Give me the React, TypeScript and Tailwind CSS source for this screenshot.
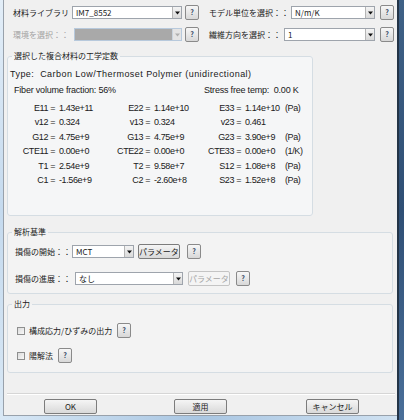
import React from "react";

type Row = [string, string, string, string, string, string, string];

const constants: Row[] = [
  ["E11 =", "1.43e+11", "E22 =", "1.14e+10", "E33 =", "1.14e+10", "(Pa)"],
  ["v12 =", "0.324", "v13 =", "0.324", "v23 =", "0.461", ""],
  ["G12 =", "4.75e+9", "G13 =", "4.75e+9", "G23 =", "3.90e+9", "(Pa)"],
  ["CTE11 =", "0.00e+0", "CTE22 =", "0.00e+0", "CTE33 =", "0.00e+0", "(1/K)"],
  ["T1 =", "2.54e+9", "T2 =", "9.58e+7", "S12 =", "1.08e+8", "(Pa)"],
  ["C1 =", "-1.56e+9", "C2 =", "-2.60e+8", "S23 =", "1.52e+8", "(Pa)"],
];

function Arrow({ disabled }: { disabled?: boolean }) {
  return (
    <div
      className={`flex h-full w-[9px] items-center justify-center border-l ${
        disabled
          ? "border-[#c9d3dd] bg-[#e4e4e4]"
          : "border-[#b5b5b5] bg-gradient-to-b from-[#f4f4f4] to-[#d9d9d9]"
      }`}
    >
      <svg width="5" height="4" viewBox="0 0 5 4">
        <path d="M0 0.5H5L2.5 3.5Z" fill={disabled ? "#b0b0b0" : "#111"} />
      </svg>
    </div>
  );
}

function Select({
  width,
  value,
  disabled,
}: {
  width: string;
  value?: string;
  disabled?: boolean;
}) {
  return (
    <div
      className={`flex h-[13px] ${width} border ${
        disabled ? "border-[#b7c9dc] bg-[#a9a9a9]" : "border-[#9ea4ac] bg-white"
      }`}
    >
      <span className="flex-1 truncate pl-[3px] text-[8px] leading-[11px] text-[#1a1a1a]">
        {value}
      </span>
      <Arrow disabled={disabled} />
    </div>
  );
}

function Help({ className = "" }: { className?: string }) {
  return (
    <button
      className={`flex h-[15px] w-[14px] items-center justify-center rounded-[2px] border border-[#8a8a8a] bg-gradient-to-b from-[#f7f7f7] to-[#d8d8d8] text-[7px] font-bold leading-none text-[#2a3c5e] ${className}`}
    >
      ?
    </button>
  );
}

function Button({
  children,
  width,
  disabled,
  className = "",
}: {
  children: React.ReactNode;
  width: string;
  disabled?: boolean;
  className?: string;
}) {
  return (
    <button
      className={`flex h-[15px] ${width} items-center justify-center rounded-[2px] border text-[8px] leading-none ${
        disabled
          ? "border-[#c4c4c4] bg-[#f4f4f4] text-[#a6a6a6]"
          : "border-[#7c7c7c] bg-gradient-to-b from-[#f5f5f5] to-[#d9d9d9] text-[#1a1a1a]"
      } ${className}`}
    >
      {children}
    </button>
  );
}

function Checkbox() {
  return (
    <span className="h-[8px] w-[8px] border border-[#8e8f8f] bg-gradient-to-br from-[#dcdcdc] to-[#f8f8f8]" />
  );
}

export default function App() {
  return (
    <div className="flex h-[420px] w-[404px] overflow-hidden bg-[#c6dbee] font-['Noto_Sans_CJK_JP',sans-serif] text-[#1a1a1a]">
      <div className="w-[3px] bg-gradient-to-b from-[#e3eef8] via-[#c5daee] to-[#d9e8f5]" />

      <div className="flex w-[394px] flex-col">
        <div className="flex h-[416px] flex-col border-b border-l border-[#98a1ab] bg-[#f0f0f0] pt-[5px]">
          {/* top selectors */}
          <div className="flex h-[15px] items-center pl-[9px]">
            <span className="w-[59px] text-[8px] leading-none">材料ライブラリ</span>
            <Select width="w-[110px]" value="IM7_8552" />
            <Help className="ml-[3px]" />
            <span className="ml-[10px] w-[82px] text-[8px] leading-none">モデル単位を選択：：</span>
            <Select width="w-[84px]" value="N/m/K" />
            <Help className="ml-[5px]" />
          </div>
          <div className="mt-[7px] flex h-[15px] items-center pl-[9px]">
            <span className="w-[61px] text-[8px] leading-none text-[#a3a3a3]">環境を選択：：</span>
            <Select width="w-[108px]" disabled />
            <Help className="ml-[3px]" />
            <span className="ml-[10px] w-[75px] text-[8px] leading-none">繊維方向を選択：：</span>
            <Select width="w-[91px]" value="1" />
            <Help className="ml-[5px]" />
          </div>

          {/* engineering constants */}
          <fieldset className="ml-[3px] mt-[8px] h-[166px] w-[306px] rounded-[3px] border border-[#d5dde3] bg-[#f5f6f7]">
            <legend className="ml-[4px] px-[2px] text-[8px] leading-[12px]">
              選択した複合材料の工学定数
            </legend>
            <div className="font-['Liberation_Sans',sans-serif] text-[9px] text-[#202020]">
              <div className="mt-[6px] whitespace-nowrap pl-[2px] leading-[12px] tracking-[0.45px]">
                Type:&nbsp;&nbsp;Carbon Low/Thermoset Polymer (unidirectional)
              </div>
              <div className="mt-[4px] flex whitespace-nowrap pl-[6px] leading-[12px] tracking-[-0.2px]">
                <span className="w-[190px]">Fiber volume fraction: 56%</span>
                <span>Stress free temp:&nbsp;&nbsp;0.00 K</span>
              </div>
              <div className="mt-[5px] grid auto-rows-[14.5px] grid-cols-[51px_47px_48px_45px_46px_40px_auto] items-center whitespace-nowrap tracking-[-0.4px]">
                {constants.map((r, i) => (
                  <React.Fragment key={i}>
                    <span className="pr-[4px] text-right">{r[0]}</span>
                    <span>{r[1]}</span>
                    <span className="pr-[4px] text-right">{r[2]}</span>
                    <span>{r[3]}</span>
                    <span className="pr-[4px] text-right">{r[4]}</span>
                    <span>{r[5]}</span>
                    <span>{r[6]}</span>
                  </React.Fragment>
                ))}
              </div>
            </div>
          </fieldset>

          {/* analysis criteria */}
          <fieldset className="ml-[3px] mt-[10px] h-[68px] w-[386px] rounded-[3px] border border-[#d5dde3] bg-[#f3f3f3]">
            <legend className="ml-[4px] px-[2px] text-[8px] leading-[12px]">解析基準</legend>
            <div className="mt-[6px] flex h-[15px] items-center pl-[7px]">
              <span className="w-[57px] text-[8px] leading-none">損傷の開始：：</span>
              <Select width="w-[62px]" value="MCT" />
              <Button width="w-[42px]" className="ml-[4px]">
                パラメータ
              </Button>
              <Help className="ml-[7px]" />
            </div>
            <div className="mt-[12px] flex h-[15px] items-center pl-[7px]">
              <span className="w-[60px] text-[8px] leading-none">損傷の進展：：</span>
              <Select width="w-[108px]" value="なし" />
              <Button width="w-[42px]" className="ml-[5px]" disabled>
                パラメータ
              </Button>
              <Help className="ml-[6px]" />
            </div>
          </fieldset>

          {/* output */}
          <fieldset className="ml-[3px] mt-[4px] h-[75px] w-[386px] rounded-[3px] border border-[#d5dde3] bg-[#f3f3f3]">
            <legend className="ml-[4px] px-[2px] text-[8px] leading-[12px]">出力</legend>
            <div className="mt-[13px] flex h-[15px] items-center pl-[9px]">
              <Checkbox />
              <span className="ml-[4px] text-[8px] leading-none">構成応力/ひずみの出力</span>
              <Help className="ml-[5px]" />
            </div>
            <div className="mt-[10px] flex h-[15px] items-center pl-[9px]">
              <Checkbox />
              <span className="ml-[4px] text-[8px] leading-none">陽解法</span>
              <Help className="ml-[5px]" />
            </div>
          </fieldset>

          <div className="ml-[3px] mt-[20px] w-[388px] border-t border-b border-t-[#d6d6d6] border-b-white" />

          <div className="mt-[4px] flex pl-[40px]">
            <Button width="w-[53px]">OK</Button>
            <Button width="w-[53px]" className="ml-[77px]">
              適用
            </Button>
            <Button width="w-[53px]" className="ml-[79px]">
              キャンセル
            </Button>
          </div>
        </div>
        <div className="flex-1 bg-gradient-to-r from-[#d7e7f5] via-[#a9c6e2] to-[#cfe1f1]" />
      </div>

      <div className="w-[7px] border-l-2 border-[#233447] bg-gradient-to-b from-[#3f6186] via-[#2f4f75] to-[#4a6f99]" />
    </div>
  );
}
